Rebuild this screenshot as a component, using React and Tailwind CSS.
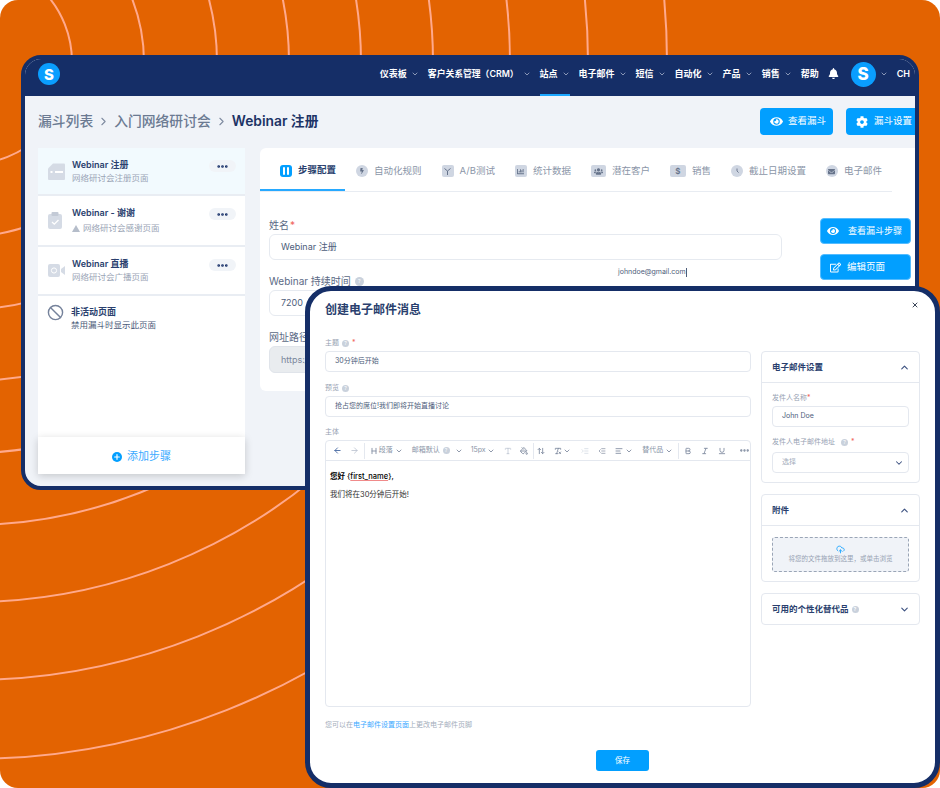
import { AlignLeft, ArrowLeft, ArrowRight, ArrowUpDown, Ban, Bold, ChevronDown, ChevronRight, ChevronUp, CloudUpload, Ellipsis, Heading, IndentDecrease, IndentIncrease, Italic, PaintBucket, Plus, RemoveFormatting, Type, Underline, X } from 'lucide-react';
import { FaBell, FaBolt, FaChartBar, FaCog, FaEnvelope, FaEye, FaRegEdit, FaUsers } from 'react-icons/fa';

const NAV = [
  { label: '仪表板', chevron: true },
  { label: '客户关系管理（CRM）', chevron: true, extra: 'text-[8.8px]' },
  { label: '站点', chevron: true, active: true },
  { label: '电子邮件', chevron: true },
  { label: '短信', chevron: true },
  { label: '自动化', chevron: true },
  { label: '产品', chevron: true },
  { label: '销售', chevron: true },
  { label: '帮助', chevron: false },
];

const TABS = [
  { label: '自动化规则', shape: 'rounded-full w-[12px]', icon: <FaBolt size={6} /> },
  {
    label: 'A/B测试',
    shape: 'rounded-[2px] w-[12px]',
    icon: (
      <svg width="9" height="8" viewBox="0 0 9 8" fill="none" stroke="currentColor" strokeWidth="1">
        <path d="M4.5 8V4L1.5 1.5M4.5 4l3-2.5" />
      </svg>
    ),
  },
  { label: '统计数据', shape: 'rounded-[2px] w-[12px]', icon: <FaChartBar size={7} /> },
  { label: '潜在客户', shape: 'rounded-[2px] w-[15px]', icon: <FaUsers size={9} /> },
  { label: '销售', shape: 'rounded-[2px] w-[16px]', icon: <span className="text-[8px] leading-none font-semibold">$</span> },
  {
    label: '截止日期设置',
    shape: 'rounded-full w-[12px]',
    icon: (
      <svg width="8" height="8" viewBox="0 0 8 8" fill="none" stroke="currentColor" strokeWidth="0.9">
        <path d="M4 1.5V4l1.6 1.6" />
      </svg>
    ),
  },
  { label: '电子邮件', shape: 'rounded-full w-[12px]', icon: <FaEnvelope size={7} /> },
];

const CIRCLES = [102, 174, 247, 319, 391, 463, 540, 618, 697];

function Hint({ className = 'w-[7px] h-[7px]' }) {
  return (
    <span className={`inline-flex rounded-full bg-[#c9d1dc] items-center justify-center text-[5px] leading-none text-white shrink-0 ${className}`}>?</span>
  );
}

function Dots() {
  return (
    <div className="w-[27px] h-[12px] rounded-full bg-[#f1f4f8] flex items-center justify-center text-[#152e67]">
      <Ellipsis size={13} strokeWidth={3} />
    </div>
  );
}

function DocIcon() {
  return (
    <svg width="17" height="17" viewBox="0 0 17 17" className="shrink-0">
      <path d="M5 0.5h11a1 1 0 0 1 1 1v14.5a1 1 0 0 1-1 1H1a1 1 0 0 1-1-1V5.5z" fill="#d5dbe5" />
      <rect x="7" y="8" width="8" height="2" fill="#fff" />
      <rect x="2.5" y="8" width="2" height="2" fill="#fff" />
    </svg>
  );
}

function ClipIcon() {
  return (
    <svg width="15" height="17" viewBox="0 0 15 17" className="shrink-0">
      <rect x="0" y="2" width="14" height="15" rx="2" fill="#d5dbe5" />
      <rect x="3.5" y="0" width="7" height="4" rx="1" fill="#c3cad6" />
      <path d="M4 10l2.3 2.2L10.5 8" fill="none" stroke="#fff" strokeWidth="1.3" />
    </svg>
  );
}

function VideoIcon() {
  return (
    <svg width="17" height="13" viewBox="0 0 17 13" className="shrink-0">
      <rect x="0" y="0" width="12" height="13" rx="2" fill="#d5dbe5" />
      <circle cx="6" cy="6.5" r="2.6" fill="none" stroke="#fff" strokeWidth="1" />
      <path d="M13 5l4-3v9l-4-3z" fill="#d5dbe5" />
    </svg>
  );
}

function SidebarItem({ icon, title, sub, warn, active, h }) {
  return (
    <div className={`${h} ${active ? 'bg-[#f2fafe]' : 'bg-white'} border-b-2 border-[#e9edf3] flex items-start pl-[10px] pr-[9px] shrink-0`}>
      <div className="w-[24px] h-full flex items-center">{icon}</div>
      <div className="flex-1 pt-[11px]">
        <div className="text-[9px] leading-[12px] font-semibold text-[#2a3f6e]">{title}</div>
        <div className={`text-[8.5px] leading-[13px] text-[#9aa5b6] flex items-center gap-[3px] ${warn ? 'mt-[3px]' : 'mt-[1px]'}`}>
          {warn && <span className="w-0 h-0 border-x-[4px] border-x-transparent border-b-[7px] border-b-[#b5bdca]" />}
          {sub}
        </div>
      </div>
      <div className="pt-[12px]"><Dots /></div>
    </div>
  );
}

function Tab({ tab }) {
  return (
    <div className="flex items-center gap-[6px] text-[#8b96a8] text-[9.5px] whitespace-nowrap">
      <span className={`${tab.shape} h-[12px] bg-[#cfd6e2] flex items-center justify-center text-[#66738a] overflow-hidden`}>
        {tab.icon}
      </span>
      {tab.label}
    </div>
  );
}

function BlueButton({ icon, children, className = '' }) {
  return (
    <div className={`bg-[#029fff] text-white rounded-[4px] flex items-center text-[9.5px] whitespace-nowrap shrink-0 ${className}`}>
      {icon}
      {children}
    </div>
  );
}

function Label({ children, className = '' }) {
  return <div className={`text-[10px] leading-[14px] text-[#5b6a85] ${className}`}>{children}</div>;
}

function ModalLabel({ children, className = '' }) {
  return <div className={`text-[7px] leading-[10px] text-[#97a2b3] flex items-center gap-[3px] ${className}`}>{children}</div>;
}

function ModalInput({ children, className = '' }) {
  return (
    <div className={`h-[21px] border border-[#e4e8ef] rounded-[4px] flex items-center pl-[9px] text-[7px] text-[#4d5d7a] ${className}`}>{children}</div>
  );
}

function Panel({ title, hint, open, children, className = '' }) {
  const Chevron = open ? ChevronUp : ChevronDown;
  return (
    <div className={`border border-[#e4e8ef] rounded-[4px] ${className}`}>
      <div className={`flex items-center justify-between pl-[10px] pr-[9px] ${open ? 'border-b border-[#e4e8ef] h-[31px]' : 'h-[30px]'}`}>
        <div className="text-[8.5px] font-bold text-[#2a3f6e] flex items-center gap-[3px]">
          {title}
          {hint && <Hint />}
        </div>
        <Chevron size={11} strokeWidth={2.5} className="text-[#3c5180]" />
      </div>
      {children}
    </div>
  );
}

function Toolbar() {
  const iconCls = 'text-[#7b879c] shrink-0';
  const chev = (cls) => <ChevronDown size={8} strokeWidth={2.5} className={`${iconCls} ${cls}`} />;
  return (
    <div className="h-[20px] border-b border-[#e4e8ef] flex items-center text-[7px] text-[#8a95a7] whitespace-nowrap">
      <ArrowLeft size={9} strokeWidth={2.5} className="text-[#4e6fa5] ml-[7px] shrink-0" />
      <ArrowRight size={9} strokeWidth={2} className="text-[#b4bccb] ml-[8px] shrink-0" />
      <span className="w-px h-[16px] bg-[#e4e8ef] ml-[5px]" />
      <Heading size={8} strokeWidth={2.5} className={`${iconCls} ml-[5px]`} />
      <span className="ml-[1px]">段落</span>
      {chev('ml-[2px]')}
      <span className="ml-[9px]">邮箱默认</span>
      <Hint className="w-[7px] h-[7px] ml-[3px]" />
      {chev('ml-[5px]')}
      <span className="ml-[8px]">15px</span>
      {chev('ml-[1px]')}
      <Type size={8} strokeWidth={2} className="text-[#b4bccb] shrink-0 ml-[9px]" />
      <PaintBucket size={8} strokeWidth={2.5} className={`${iconCls} ml-[8px]`} />
      <span className="w-px h-[16px] bg-[#e4e8ef] ml-[5px]" />
      <ArrowUpDown size={8} strokeWidth={2.5} className={`${iconCls} ml-[4px]`} />
      <RemoveFormatting size={8} strokeWidth={2.5} className={`${iconCls} ml-[9px]`} />
      {chev('ml-[1px]')}
      <IndentIncrease size={8} strokeWidth={2} className="text-[#ccd3de] shrink-0 ml-[10px]" />
      <IndentDecrease size={8} strokeWidth={2} className={`${iconCls} ml-[9px]`} />
      <AlignLeft size={8} strokeWidth={2.5} className={`${iconCls} ml-[9px]`} />
      {chev('ml-[2px]')}
      <span className="ml-[9px]">替代品</span>
      {chev('ml-[2px]')}
      <span className="w-px h-[16px] bg-[#e4e8ef] ml-[5px]" />
      <Bold size={8} strokeWidth={2.5} className={`${iconCls} ml-[5px]`} />
      <Italic size={8} strokeWidth={2.5} className={`${iconCls} ml-[9px]`} />
      <Underline size={8} strokeWidth={2.5} className={`${iconCls} ml-[9px]`} />
      <Ellipsis size={11} strokeWidth={3} className={`${iconCls} ml-[13px]`} />
    </div>
  );
}

function AppWindow() {
  return (
    <div className="absolute left-[21px] top-[55px] w-[898px] h-[435px] rounded-[20px] border-4 border-[#152e67] overflow-hidden bg-[#f0f3f8] flex flex-col">
      {/* Barra superior */}
      <div className="h-[37px] bg-[#152e67] flex items-center pl-[13px] pr-[5px] shrink-0">
        <div className="w-[22px] h-[22px] mb-[7px] rounded-full bg-[#0a9eff] flex items-center justify-center text-white font-extrabold text-[15px] leading-none">S</div>
        <div className="ml-auto h-full flex items-center gap-[9px] text-white text-[9px] font-semibold">
          {NAV.map((n) => (
            <div
              key={n.label}
              className={`h-full flex items-center whitespace-nowrap ${n.extra || ''} ${n.active ? 'border-b-2 border-[#1aa7ff] pb-[6px]' : 'pb-[8px]'}`}
            >
              {n.label}
              {n.chevron && <ChevronDown size={8} strokeWidth={2} className="ml-[4px] text-[#c4cde0]" />}
            </div>
          ))}
          <FaBell size={11} className="mb-[8px] text-white" />
          <div className="w-[25px] h-[25px] mb-[7px] ml-[3px] rounded-full bg-[#0a9eff] flex items-center justify-center font-extrabold text-[17px] leading-none">S</div>
          <ChevronDown size={8} strokeWidth={2} className="-ml-[5px] mb-[8px] text-[#c4cde0]" />
          <span className="mb-[8px]">CH</span>
        </div>
      </div>

      <div className="flex-1 pl-[13px] pt-[12px] overflow-hidden">
        {/* Migas y acciones */}
        <div className="w-[883px] h-[27px] flex items-center">
          <div className="flex items-center text-[13.8px] font-medium text-[#6b7a92] whitespace-nowrap">
            漏斗列表
            <ChevronRight size={13} className="mx-[4px] text-[#7f8ba0]" />
            入门网络研讨会
            <ChevronRight size={13} className="mx-[4px] text-[#7f8ba0]" />
            <span className="font-semibold text-[#1d3466]">Webinar 注册</span>
          </div>
          <div className="ml-auto flex gap-[13px]">
            <BlueButton className="h-[27px] w-[73px] pl-[10px] gap-[5px]" icon={<FaEye size={13} />}>查看漏斗</BlueButton>
            <BlueButton className="h-[27px] w-[75px] pl-[10px] gap-[6px]" icon={<FaCog size={12} />}>漏斗设置</BlueButton>
          </div>
        </div>

        <div className="flex gap-[15px] mt-[13px]">
          {/* Pasos */}
          <div className="w-[207px] h-[326px] flex flex-col shrink-0">
            <SidebarItem h="h-[48px]" active icon={<DocIcon />} title="Webinar 注册" sub="网络研讨会注册页面" />
            <SidebarItem h="h-[51px]" icon={<ClipIcon />} title="Webinar - 谢谢" sub="网络研讨会感谢页面" warn />
            <SidebarItem h="h-[49px]" icon={<VideoIcon />} title="Webinar 直播" sub="网络研讨会广播页面" />
            <div className="flex-1 bg-white flex items-start pl-[9px] pt-[8px]">
              <Ban size={17} strokeWidth={2} className="text-[#75829b] mr-[7px] shrink-0" />
              <div className="pt-[2px]">
                <div className="text-[9px] leading-[12px] font-semibold text-[#2a3f6e]">非活动页面</div>
                <div className="text-[8.5px] leading-[13px] text-[#4a5a78] mt-[1px]">禁用漏斗时显示此页面</div>
              </div>
            </div>
            <div className="h-[37px] bg-white shadow-[0_2px_8px_rgba(0,0,0,0.18)] flex items-center justify-center gap-[5px] text-[11px] text-[#3aa9ff] shrink-0 pt-[2px]">
              <span className="w-[10px] h-[10px] rounded-full bg-[#029fff] text-white flex items-center justify-center">
                <Plus size={8} strokeWidth={3.5} />
              </span>
              添加步骤
            </div>
          </div>

          {/* Panel principal */}
          <div className="w-[660px] h-[243px] bg-white rounded-md shrink-0">
            <div className="w-[632px] h-[44px] border-b border-[#e8ecf2] flex items-stretch">
              <div className="w-[85px] border-b-2 border-[#27a9ff] flex items-center pl-[20px] pt-[4px] gap-[6px] text-[9.5px] font-semibold text-[#2a3f6e] whitespace-nowrap shrink-0">
                <span className="w-[12px] h-[12px] rounded-[3px] bg-[#029fff] flex items-center justify-center gap-[2px]">
                  <span className="w-[2px] h-[8px] bg-white rounded-full" />
                  <span className="w-[2px] h-[8px] bg-white rounded-full" />
                </span>
                步骤配置
              </div>
              <div className="ml-[11px] pt-[3px] flex items-center gap-[20px]">
                {TABS.map((t) => <Tab key={t.label} tab={t} />)}
              </div>
            </div>

            <div className="flex pl-[9px] pt-[26px]">
              <div className="w-[513px] shrink-0">
                <Label>姓名<span className="text-[#f0645a] ml-[1px]">*</span></Label>
                <div className="h-[26px] mt-[2px] border border-[#e6eaf0] rounded-md flex items-center pl-[11px] text-[9px] text-[#4d5d7a]">Webinar 注册</div>
                <Label className="mt-[14px] flex items-center gap-[4px]">Webinar 持续时间 <Hint className="w-[9px] h-[9px]" /></Label>
                <div className="h-[26px] mt-[2px] border border-[#e6eaf0] rounded-md flex items-center pl-[11px] text-[9px] text-[#4d5d7a]">7200</div>
                <Label className="mt-[14px]">网址路径</Label>
                <div className="h-[27px] mt-[2px] bg-[#e9ecef] border border-[#e0e4ea] rounded-md flex items-center pl-[11px] text-[9px] text-[#7b879c]">https://</div>
              </div>
              <div className="ml-[38px] w-[91px] flex flex-col gap-[10px]">
                <BlueButton className="h-[26px] pl-[6px] gap-[9px] border border-[#54bcff] text-[9px]" icon={<FaEye size={12} />}>查看漏斗步骤</BlueButton>
                <BlueButton className="h-[26px] pl-[9px] gap-[6px] border border-[#54bcff]" icon={<FaRegEdit size={11} />}>编辑页面</BlueButton>
              </div>
            </div>
          </div>
        </div>
      </div>

      {/* Texto flotante sobre el formulario */}
      <div className="absolute left-[593px] top-[207px] w-[80px] h-[12px] bg-white/80 flex items-center text-[7px] text-[#4d5d7a]">
        johndoe@gmail.com<span className="w-px h-[9px] bg-[#4d5d7a]" />
      </div>
    </div>
  );
}

function EmailModal() {
  return (
    <div className="absolute left-[305px] top-[286px] w-[635px] h-[502px] rounded-[26px] border-[5px] border-[#152e67] bg-white flex flex-col">
      <X size={8} strokeWidth={3} className="absolute right-[16px] top-[10px] text-[#3b4658]" />
      <div className="pl-[15px] pt-[10px] mt-[1px] text-[12px] leading-[16px] font-bold text-[#2a3f6e]">创建电子邮件消息</div>

      <div className="flex gap-[10px] pl-[15px] mt-[20px]">
        <div className="w-[426px] shrink-0">
          <ModalLabel>主题 <Hint /><span className="text-[#f0645a]">*</span></ModalLabel>
          <ModalInput className="mt-[3px]">30分钟后开始</ModalInput>
          <ModalLabel className="mt-[11px]">预览 <Hint /></ModalLabel>
          <ModalInput className="mt-[3px]">抢占您的席位!我们即将开始直播讨论</ModalInput>
          <ModalLabel className="mt-[10px]">主体</ModalLabel>
          <div className="mt-[3px] h-[267px] border border-[#e4e8ef] rounded-[4px]">
            <Toolbar />
            <div className="pl-[4px] pt-[10px] text-[7.5px] text-[#333]">
              <div className="leading-[12px] font-medium text-black">
                <span className="font-bold">您好</span> {'{'}<span className="underline decoration-[#f08a8a]">first_name</span>{'}'},
              </div>
              <div className="leading-[12px] mt-[6px]">我们将在30分钟后开始!</div>
            </div>
          </div>
          <div className="mt-[13px] text-[7px] leading-[10px] text-[#a3adbb]">
            您可以在<span className="text-[#3aa9ff]">电子邮件设置页面</span>上更改电子邮件页脚
          </div>
        </div>

        <div className="w-[159px] shrink-0 pt-[13px] flex flex-col gap-[11px]">
          <Panel title="电子邮件设置" open>
            <div className="px-[10px] pt-[10px] pb-[9px]">
              <ModalLabel>发件人名称<span className="text-[#f0645a] -ml-[3px]">*</span></ModalLabel>
              <ModalInput className="mt-[3px]">John Doe</ModalInput>
              <ModalLabel className="mt-[10px]">发件人电子邮件地址 <Hint className="w-[7px] h-[7px] ml-[3px]" /><span className="text-[#f0645a]">*</span></ModalLabel>
              <ModalInput className="mt-[5px] justify-between pr-[4px] text-[#a3adbb]">
                选择
                <ChevronDown size={10} strokeWidth={2.5} className="text-[#3c5180]" />
              </ModalInput>
            </div>
          </Panel>
          <Panel title="附件" open>
            <div className="px-[10px] pt-[11px] pb-[9px]">
              <div className="h-[35px] bg-[#f0f3f8] border border-dashed border-[#9aa5b6] rounded-[3px] flex flex-col items-center justify-center">
                <CloudUpload size={9} strokeWidth={2.5} className="text-[#27a9ff]" />
                <div className="text-[6.5px] leading-[10px] text-[#97a2b3] whitespace-nowrap">将您的文件拖放到这里，或单击浏览</div>
              </div>
            </div>
          </Panel>
          <Panel title="可用的个性化替代品" hint />
        </div>
      </div>

      <div className="flex justify-center mt-[20px]">
        <div className="w-[53px] h-[21px] bg-[#029fff] rounded-[3px] flex items-center justify-center text-white text-[7.5px]">保存</div>
      </div>
    </div>
  );
}

export default function App() {
  return (
    <div className="relative w-[940px] h-[788px] overflow-hidden bg-white font-[family-name:Inter,'Noto_Sans_CJK_SC',sans-serif]">
      <div className="absolute inset-0 rounded-[18px] bg-[#e36301] overflow-hidden">
        <svg width="940" height="788" viewBox="0 0 940 788" fill="none">
          {CIRCLES.map((r) => (
            <circle key={r} cx="-30" cy="62" r={r} stroke="#ffa98c" strokeWidth="2" />
          ))}
        </svg>
      </div>
      <AppWindow />
      <EmailModal />
    </div>
  );
}
